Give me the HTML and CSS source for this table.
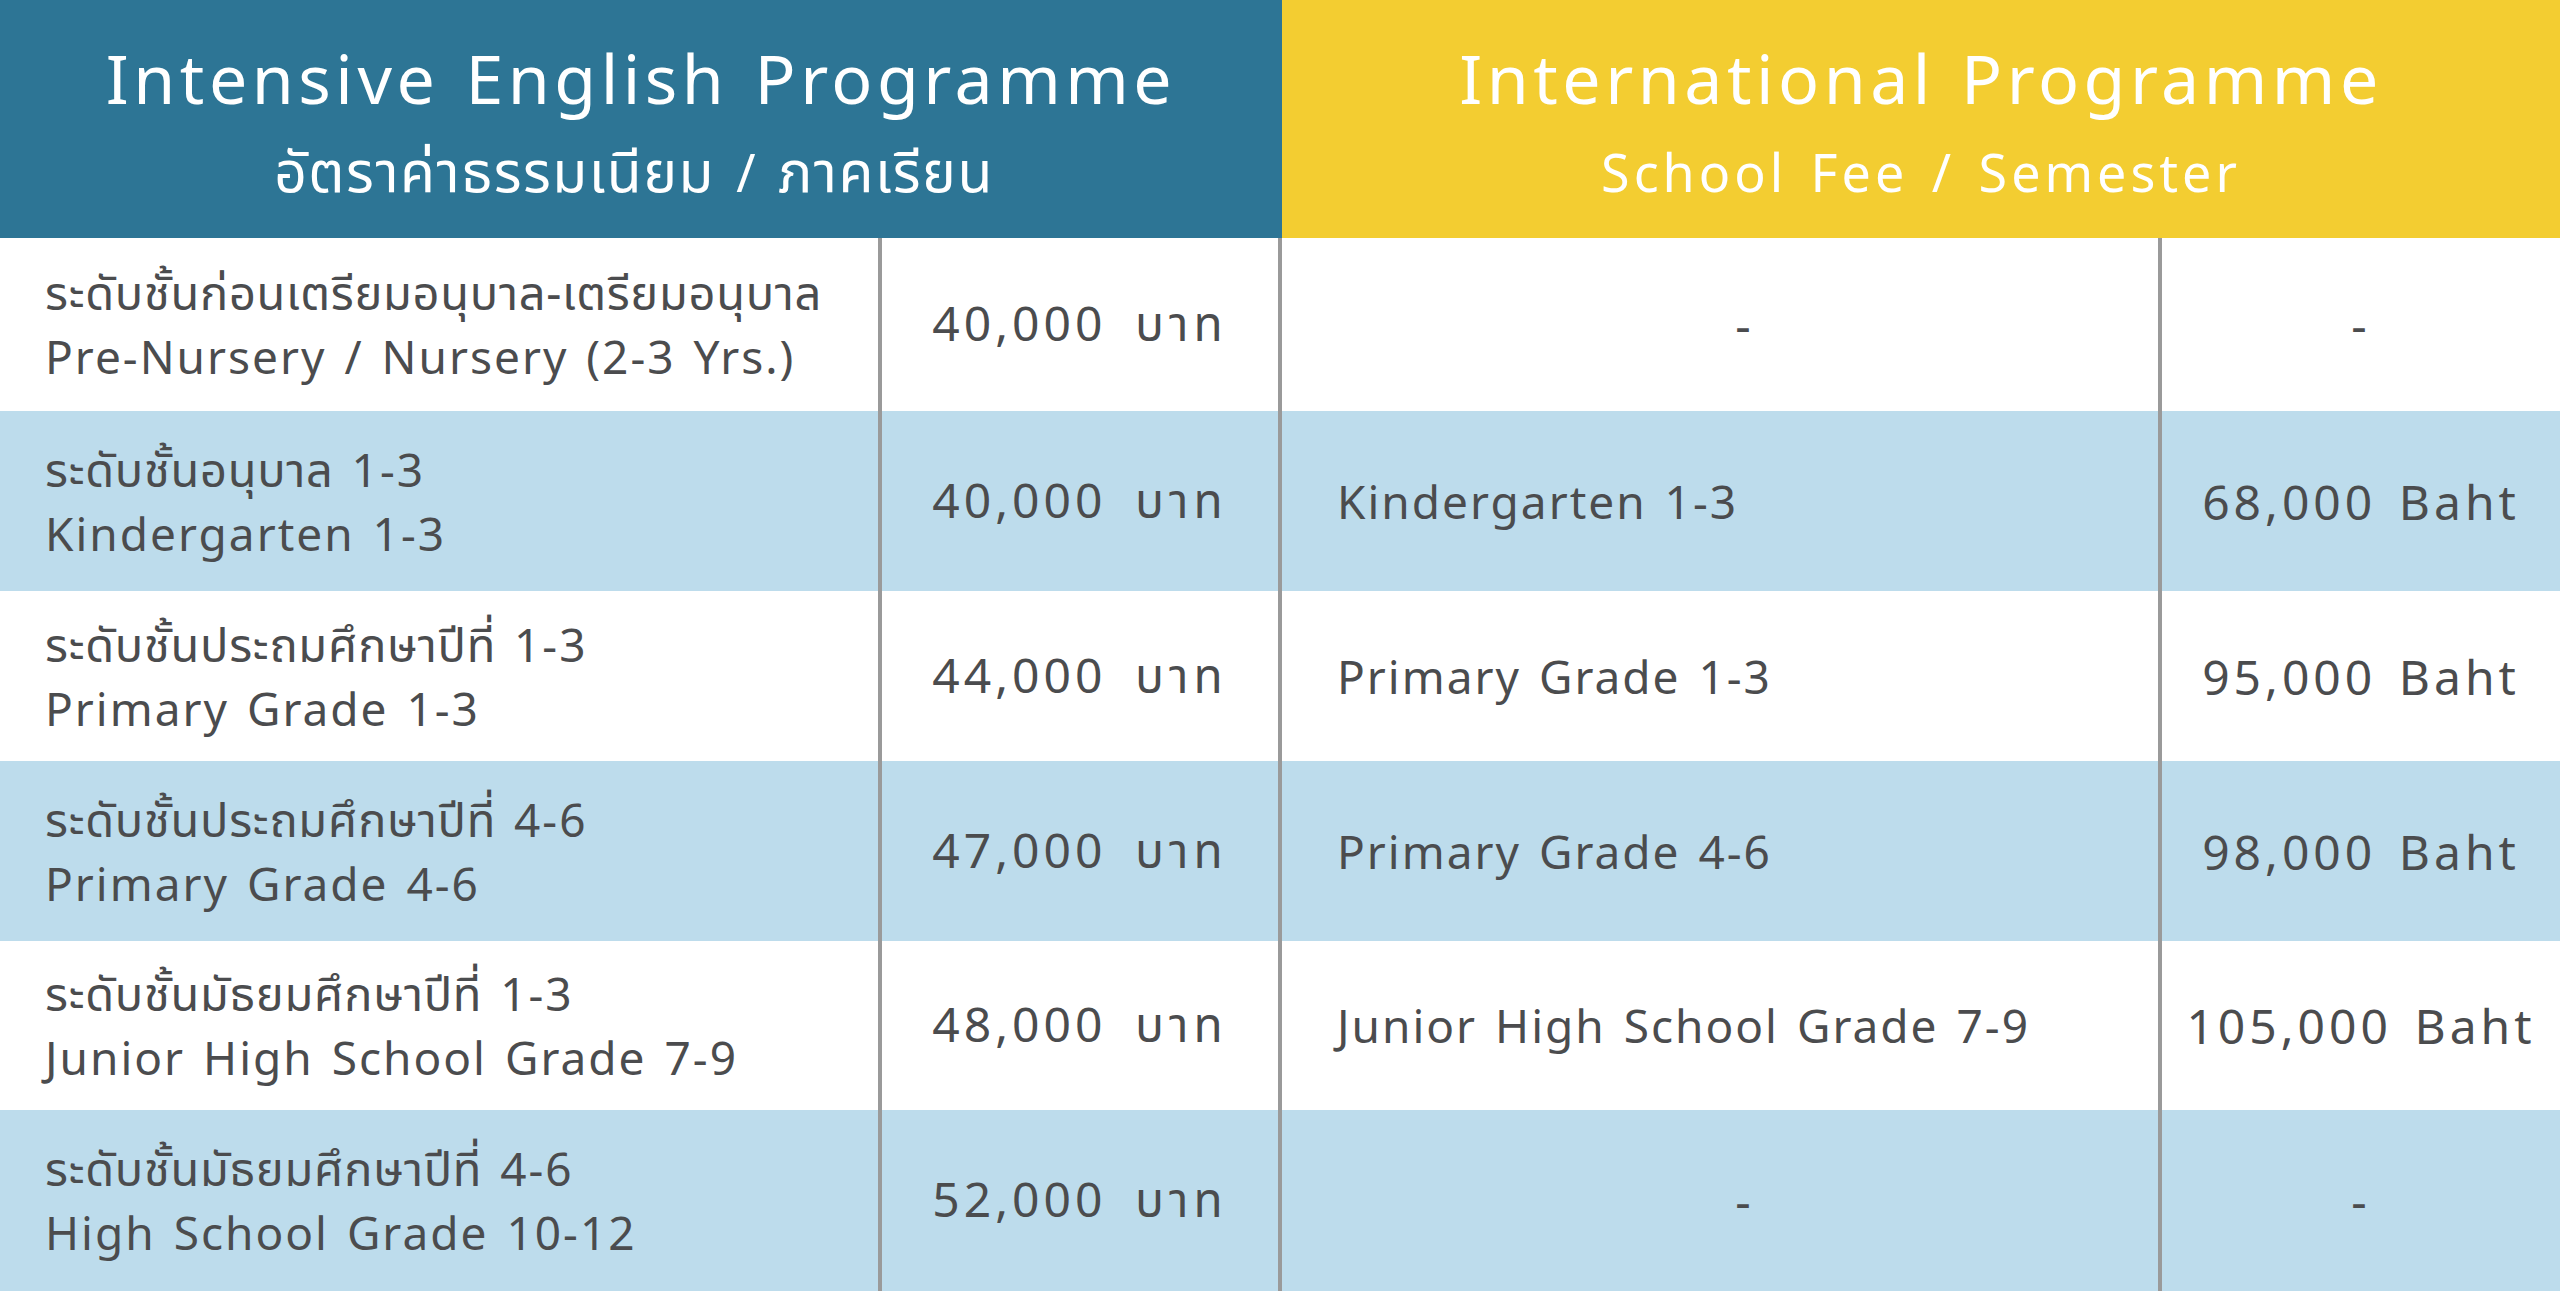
FILE: index.html
```html
<!DOCTYPE html>
<html lang="th">
<head>
<meta charset="utf-8">
<title>School Fee</title>
<link rel="stylesheet" href="styles.css">
</head>
<body>
<div class="fees">
  <div class="head">
    <div class="head-cell head-iep">
      <div class="head-title">Intensive English Programme</div>
      <div class="head-sub head-sub-th"><span class="th">อัตราค่าธรรมเนียม</span> / <span class="th">ภาคเรียน</span></div>
    </div>
    <div class="head-cell head-ip">
      <div class="head-title">International Programme</div>
      <div class="head-sub">School Fee / Semester</div>
    </div>
  </div>

  <div class="row row-white row-a">
    <div class="cell label"><div class="line"><span class="th">ระดับชั้นก่อนเตรียมอนุบาล-เตรียมอนุบาล</span></div><div class="line">Pre-Nursery / Nursery (2-3 Yrs.)</div></div>
    <div class="cell price"><span class="amount">40,000 <span class="th">บาท</span></span></div>
    <div class="cell ip-label dash">-</div>
    <div class="cell price">-</div>
  </div>

  <div class="row row-blue row-b">
    <div class="cell label"><div class="line"><span class="th">ระดับชั้นอนุบาล</span> 1-3</div><div class="line">Kindergarten 1-3</div></div>
    <div class="cell price"><span class="amount">40,000 <span class="th">บาท</span></span></div>
    <div class="cell ip-label">Kindergarten 1-3</div>
    <div class="cell price">68,000 Baht</div>
  </div>

  <div class="row row-white row-c">
    <div class="cell label"><div class="line"><span class="th">ระดับชั้นประถมศึกษาปีที่</span> 1-3</div><div class="line">Primary Grade 1-3</div></div>
    <div class="cell price"><span class="amount">44,000 <span class="th">บาท</span></span></div>
    <div class="cell ip-label">Primary Grade 1-3</div>
    <div class="cell price">95,000 Baht</div>
  </div>

  <div class="row row-blue row-b">
    <div class="cell label"><div class="line"><span class="th">ระดับชั้นประถมศึกษาปีที่</span> 4-6</div><div class="line">Primary Grade 4-6</div></div>
    <div class="cell price"><span class="amount">47,000 <span class="th">บาท</span></span></div>
    <div class="cell ip-label">Primary Grade 4-6</div>
    <div class="cell price">98,000 Baht</div>
  </div>

  <div class="row row-white row-d">
    <div class="cell label"><div class="line"><span class="th">ระดับชั้นมัธยมศึกษาปีที่</span> 1-3</div><div class="line">Junior High School Grade 7-9</div></div>
    <div class="cell price"><span class="amount">48,000 <span class="th">บาท</span></span></div>
    <div class="cell ip-label">Junior High School Grade 7-9</div>
    <div class="cell price">105,000 Baht</div>
  </div>

  <div class="row row-blue row-e">
    <div class="cell label"><div class="line"><span class="th">ระดับชั้นมัธยมศึกษาปีที่</span> 4-6</div><div class="line">High School Grade 10-12</div></div>
    <div class="cell price"><span class="amount">52,000 <span class="th">บาท</span></span></div>
    <div class="cell ip-label dash">-</div>
    <div class="cell price">-</div>
  </div>
</div>
</body>
</html>
```

FILE: styles.css
```css
html, body {
  margin: 0;
  padding: 0;
  background: #ffffff;
}

body {
  font-family: "Noto Sans", "Noto Sans Thai", "DejaVu Sans", sans-serif;
  color: #4b4c4e;
}

.th {
  font-family: "Noto Sans Thai", "Noto Sans", sans-serif;
}

.fees {
  width: 2560px;
  height: 1292px;
  display: flex;
  flex-direction: column;
  overflow: hidden;
}

.head {
  display: grid;
  grid-template-columns: 1282px 1278px;
  height: 238px;
}

.head-cell {
  display: flex;
  flex-direction: column;
  align-items: center;
  padding-top: 38px;
  color: #ffffff;
}

.head-iep {
  background: #2d7595;
}

.head-ip {
  background: #f3cd31;
}

.head-title {
  font-size: 68px;
  line-height: 80px;
  letter-spacing: 4.5px;
  word-spacing: 4px;
}

.head-sub {
  font-size: 52px;
  line-height: 64px;
  margin-top: 22px;
  letter-spacing: 4px;
  word-spacing: 6px;
}

.head-sub-th {
  letter-spacing: 1.5px;
  word-spacing: 6px;
  margin-left: -14px;
}

.head-sub-th .th {
  font-size: 57px;
}

.row {
  display: grid;
  grid-template-columns: 878px 400px 880px 402px;
}

.row-white { background: #ffffff; }
.row-blue { background: #bddcec; }

.row-a { height: 173px; }
.row-b { height: 180px; }
.row-c { height: 170px; }
.row-d { height: 169px; }
.row-e { height: 181px; }

.cell {
  box-sizing: border-box;
  display: flex;
  align-items: center;
  font-size: 46px;
  line-height: 61px;
  letter-spacing: 2px;
  word-spacing: 4px;
}

.cell + .cell {
  border-left: 4px solid #9a9a9a;
}

.label {
  flex-direction: column;
  align-items: flex-start;
  justify-content: center;
  padding-left: 45px;
}

.line {
  white-space: nowrap;
}

.label .th {
  font-size: 47px;
  letter-spacing: 0.7px;
}

.price {
  justify-content: center;
  font-size: 48px;
  letter-spacing: 4px;
  word-spacing: 6px;
}

.amount {
  white-space: nowrap;
  word-spacing: 12px;
}

.price .th {
  letter-spacing: 5px;
}

.ip-label {
  padding-left: 55px;
  white-space: nowrap;
}

.ip-label.dash {
  justify-content: center;
  padding-left: 48px;
  font-size: 48px;
}
```
